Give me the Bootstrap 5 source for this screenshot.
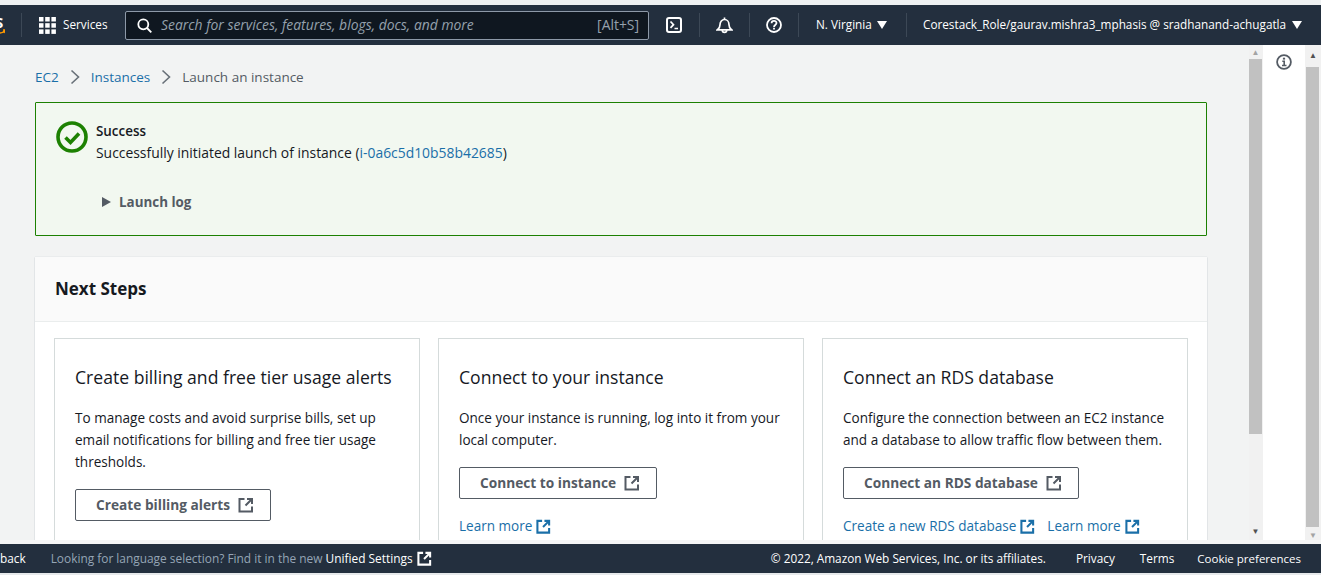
<!DOCTYPE html>
<html lang="en">
<head>
  <meta charset="UTF-8">
  <title>Launch an instance</title>
  <link href="https://cdn.jsdelivr.net/npm/bootstrap@5.3.3/dist/css/bootstrap.min.css" rel="stylesheet">
  <style>
    html, body { height: 100%; overflow: hidden; }
    body { background: #f2f3f3; font-family: "Open Sans", "Liberation Sans", sans-serif; font-size: 14px; color: #16191f; }
    a { text-decoration: none; color: #1a6fa8; }

    .page-shell { height: 575px; }
    .top-gap { height: 5px; background: #eef1f2; }
    .bottom-gap { height: 2px; background: #e6e9eb; }

    /* console header */
    .aws-bar { height: 40px; background: #232f3e; color: #fff; font-size: 11.75px; }
    .aws-logo { width: 5px; height: 24px; overflow: hidden; padding-top: 3px; }
    .aws-logo span { display: block; margin-left: -5px; font-size: 15px; font-weight: 700; line-height: 13px; }
    .bar-sep { width: 1px; height: 24px; background: #3c4856; }
    .svc-btn { width: 103px; padding-left: 17px; gap: 7px; }
    .search-box { width: 524px; height: 29px; background: #0f1720; border: 1px solid #8d99a8; border-radius: 2px; padding: 0 9px 0 11px; color: #95a1ad; font-size: 13.9px; }
    .search-box em { margin-left: 9px; }
    .icon-cell { width: 48.5px; }
    .icon-first { width: 50px; }
    .region { width: 107px; padding-left: 17px; }
    .acct { padding-left: 16px; white-space: nowrap; }
    .caret-dn { margin-left: 5px; }
    .acct .caret-dn { margin-left: 6px; }

    /* main */
    .work-area { height: 499px; }
    .work-row { height: 495px; }
    .work-strip { height: 4px; background: #f4f5f5; }
    .content-pane { width: 1249px; overflow: hidden; padding: 0 42px 0 35px; }
    .crumbs { height: 57px; color: #545b64; font-size: 13.5px; gap: 11px; padding-top: 7px; }
    .flash-box { height: 134px; border: 1px solid #1d8102; background: #f2f8f0; border-radius: 1px; padding: 18px 20px; gap: 8px; }
    .flash-title { font-weight: 600; font-size: 13.4px; line-height: 22px; margin-top: -1px; }
    .flash-msg { font-size: 13.9px; line-height: 22px; }
    .log-toggle { font-weight: 700; color: #545b64; margin-top: 27px; margin-left: 6px; line-height: 22px; gap: 8px; font-size: 13.4px; }
    .steps-panel { margin-top: 21px; background: #fff; box-shadow: 0 1px 1px rgba(0,31,63,.2), 0 0 1px rgba(0,31,63,.2); }
    .steps-head { height: 65px; background: #fafafa; border-bottom: 1px solid #eaeded; padding: 0 20px 1px; font-size: 17px; font-weight: 700; }
    .steps-body { padding: 16px 19px 0; gap: 18px; height: 300px; }
    .step-tile { width: 366px; height: 300px; border: 1px solid #d5dbdb; padding: 25px 20px; }
    .step-tile h2 { font-size: 17.6px; font-weight: 400; line-height: 26px; margin: 0 0 17px; }
    .step-tile p { line-height: 22px; margin: 0 0 16px; font-size: 13.55px; }
    .open-btn { display: inline-flex; align-items: center; gap: 8px; height: 32px; padding: 0 16px 0 20px; border: 1px solid #545b64; border-radius: 2px; color: #545b64; font-weight: 700; font-size: 13.7px; }
    .learn-row { margin-top: 17px; gap: 12px; font-size: 13.55px; }
    .learn-row a { display: inline-flex; align-items: center; gap: 4px; }

    /* scrollbars, drawn since the shot has them fixed */
    .sbar { width: 14px; background: #f1f1f1; }
    .sbar-out { width: 16px; }
    .sbar-arrow { height: 13px; font-size: 8px; line-height: 13px; text-align: center; color: #a3a3a3; padding-right: 1px; }
    .sbar-arrow-end { height: 10px; line-height: 10px; margin-bottom: 4px; color: #505050; }
    .sbar-out .sbar-arrow { padding-right: 0; height: 14px; line-height: 14px; color: #505050; }
    .sbar-out .sbar-arrow-end { height: 10px; line-height: 10px; margin-bottom: 0; color: #a3a3a3; }
    .sbar-gap-out { height: 3px; }
    .sbar-thumb-in { background: #c1c1c1; width: 13px; height: 375px; margin-top: 1px; }
    .sbar-thumb-out { background: #c1c1c1; width: 13px; height: 460px; margin: 5px 0 0 1px; }
    .side-rail { width: 42px; background: #fff; padding-top: 9px; }

    /* footer */
    .aws-foot { height: 29px; background: #232f3e; color: #fff; font-size: 11.8px; }
    .foot-note { color: #95a5b5; margin-left: 25px; font-size: 11.9px; }
    .foot-links { padding-right: 20px; gap: 25px; }
    .foot-copy { margin-right: 5px; }
    .foot-cookie { font-size: 11.5px; margin-left: -2px; }
  </style>
</head>
<body>
<div class="page-shell d-flex flex-column">
  <div class="top-gap"></div>

  <!-- Console header -->
  <div class="aws-bar d-flex align-items-center">
    <div class="aws-logo flex-shrink-0">
      <span>S</span>
      <svg width="5" height="8" viewBox="0 0 5 8" class="d-block"><path d="M0 4q3 0 4-2M3 1l2 0-1 3" stroke="#f90" stroke-width="1.4" fill="none"/></svg>
    </div>
    <div class="bar-sep ms-3"></div>
    <div class="svc-btn d-flex align-items-center flex-shrink-0">
      <svg width="17" height="17" viewBox="0 0 17 17" fill="#fff"><rect width="4.500" height="4.500"/><rect x="6.200" width="4.500" height="4.500"/><rect x="12.400" width="4.500" height="4.500"/><rect y="6.200" width="4.500" height="4.500"/><rect x="6.200" y="6.200" width="4.500" height="4.500"/><rect x="12.400" y="6.200" width="4.500" height="4.500"/><rect y="12.400" width="4.500" height="4.500"/><rect x="6.200" y="12.400" width="4.500" height="4.500"/><rect x="12.400" y="12.400" width="4.500" height="4.500"/></svg>
      <span>Services</span>
    </div>
    <div class="search-box d-flex align-items-center flex-shrink-0">
      <svg width="15" height="15" viewBox="0 0 15 15" fill="none" stroke="#fff" stroke-width="1.800"><circle cx="6.300" cy="6.300" r="5"/><path d="M10 10l4.300 4.300"/></svg>
      <em class="flex-grow-1">Search for services, features, blogs, docs, and more</em>
      <span>[Alt+S]</span>
    </div>
    <div class="icon-first d-flex justify-content-center">
      <svg width="16" height="16" viewBox="0 0 16 16" fill="none" stroke="#fff" stroke-width="2"><rect x="1" y="1" width="14" height="14" rx="2"/><path d="M4.500 4.500l3 3.200-3 3.200M8.500 11.500h3.500" stroke-width="1.700"/></svg>
    </div>
    <div class="bar-sep"></div>
    <div class="icon-cell d-flex justify-content-center">
      <svg width="17" height="17" viewBox="0 0 17 17" fill="none" stroke="#fff" stroke-width="1.700"><path d="M8.500 .5v2M1.500 12.800h14c-1.800-1.300-2.500-2.300-2.500-5 0-3-2-5.300-4.500-5.300S4 4.800 4 7.800c0 2.700-.7 3.700-2.500 5z"/><path d="M6.300 13a2.200 2.400 0 0 0 4.400 0"/></svg>
    </div>
    <div class="bar-sep"></div>
    <div class="icon-cell d-flex justify-content-center">
      <svg width="16" height="16" viewBox="0 0 16 16" fill="none" stroke="#fff" stroke-width="1.800"><circle cx="8" cy="8" r="7"/><path d="M5.600 6.200c0-3.100 4.900-3.100 4.900-.1 0 1.900-2.500 1.900-2.500 3.800"/><path d="M8 10.800v1.800"/></svg>
    </div>
    <div class="bar-sep"></div>
    <div class="region flex-shrink-0 d-flex align-items-center">N. Virginia
      <svg class="caret-dn" width="10" height="8" viewBox="0 0 10 8" fill="#fff"><path d="M0 0h10L5 8z"/></svg>
    </div>
    <div class="bar-sep"></div>
    <div class="acct d-flex align-items-center">Corestack_Role/gaurav.mishra3_mphasis @ sradhanand-achugatla
      <svg class="caret-dn" width="10" height="8" viewBox="0 0 10 8" fill="#fff"><path d="M0 0h10L5 8z"/></svg>
    </div>
  </div>

  <div class="work-area">
    <div class="work-row d-flex">
      <div class="content-pane flex-shrink-0">
        <div class="crumbs d-flex align-items-center">
          <a href="#">EC2</a>
          <svg width="10" height="16" viewBox="0 0 10 16" fill="none" stroke="#687078" stroke-width="1.600"><path d="M1.500 1.500L8.500 8l-7 6.500"/></svg>
          <a href="#">Instances</a>
          <svg width="10" height="16" viewBox="0 0 10 16" fill="none" stroke="#687078" stroke-width="1.600"><path d="M1.500 1.500L8.500 8l-7 6.500"/></svg>
          <span>Launch an instance</span>
        </div>

        <div class="flash-box d-flex">
          <svg width="32" height="32" viewBox="0 0 32 32" fill="none" stroke="#1d8102" class="flex-shrink-0"><circle cx="16" cy="16" r="14" stroke-width="3.600"/><path d="M9.500 16.500l5 5 8.500-9" stroke-width="3.600"/></svg>
          <div>
            <div class="flash-title">Success</div>
            <div class="flash-msg">Successfully initiated launch of instance (<a href="#">i-0a6c5d10b58b42685</a>)</div>
            <div class="log-toggle d-flex align-items-center">
              <svg width="9" height="10" viewBox="0 0 9 10" fill="#545b64"><path d="M0 0l9 5-9 5z"/></svg>
              <span>Launch log</span>
            </div>
          </div>
        </div>

        <div class="steps-panel">
          <div class="steps-head d-flex align-items-center">Next Steps</div>
          <div class="steps-body d-flex">
            <div class="step-tile flex-shrink-0">
              <h2>Create billing and free tier usage alerts</h2>
              <p>To manage costs and avoid surprise bills, set up email notifications for billing and free tier usage thresholds.</p>
              <a href="#" class="open-btn">Create billing alerts
                <svg width="16" height="16" viewBox="0 0 16 16" fill="none" stroke="currentColor" stroke-width="2"><path d="M6.500 2H1.500v12.500H14V9.500"/><path d="M9 2h5v5M14 2L7.500 8.500" stroke-width="2"/></svg>
              </a>
            </div>
            <div class="step-tile flex-shrink-0">
              <h2>Connect to your instance</h2>
              <p>Once your instance is running, log into it from your local computer.</p>
              <a href="#" class="open-btn">Connect to instance
                <svg width="16" height="16" viewBox="0 0 16 16" fill="none" stroke="currentColor" stroke-width="2"><path d="M6.500 2H1.500v12.500H14V9.500"/><path d="M9 2h5v5M14 2L7.500 8.500"/></svg>
              </a>
              <div class="learn-row d-flex">
                <a href="#">Learn more
                  <svg width="15" height="15" viewBox="0 0 16 16" fill="none" stroke="currentColor" stroke-width="2.200"><path d="M6.500 2H1.500v12.500H14V9.500"/><path d="M9 2h5v5M14 2L7.500 8.500"/></svg>
                </a>
              </div>
            </div>
            <div class="step-tile flex-shrink-0">
              <h2>Connect an RDS database</h2>
              <p>Configure the connection between an EC2 instance and a database to allow traffic flow between them.</p>
              <a href="#" class="open-btn">Connect an RDS database
                <svg width="16" height="16" viewBox="0 0 16 16" fill="none" stroke="currentColor" stroke-width="2"><path d="M6.500 2H1.500v12.500H14V9.500"/><path d="M9 2h5v5M14 2L7.500 8.500"/></svg>
              </a>
              <div class="learn-row d-flex">
                <a href="#">Create a new RDS database
                  <svg width="15" height="15" viewBox="0 0 16 16" fill="none" stroke="currentColor" stroke-width="2.200"><path d="M6.500 2H1.500v12.500H14V9.500"/><path d="M9 2h5v5M14 2L7.500 8.500"/></svg>
                </a>
                <a href="#">Learn more
                  <svg width="15" height="15" viewBox="0 0 16 16" fill="none" stroke="currentColor" stroke-width="2.200"><path d="M6.500 2H1.500v12.500H14V9.500"/><path d="M9 2h5v5M14 2L7.500 8.500"/></svg>
                </a>
              </div>
            </div>
          </div>
        </div>
      </div>

      <!-- inner scrollbar -->
      <div class="sbar d-flex flex-column flex-shrink-0">
        <div class="sbar-arrow">&#9650;</div>
        <div class="sbar-thumb-in"></div>
        <div class="flex-grow-1"></div>
        <div class="sbar-arrow sbar-arrow-end">&#9660;</div>
      </div>

      <div class="side-rail flex-shrink-0 d-flex justify-content-center">
        <svg width="16" height="16" viewBox="0 0 16 16" fill="none" stroke="#545b64" stroke-width="1.800"><circle cx="8" cy="8" r="6.900"/><path d="M8 3.700v1.900" stroke-width="2.200"/><path d="M6.300 7.300H8.200V11.500M6 11.500h4.500" stroke-width="1.600"/></svg>
      </div>

      <!-- outer scrollbar -->
      <div class="sbar sbar-out d-flex flex-column flex-shrink-0">
        <div class="sbar-gap-out"></div>
        <div class="sbar-arrow">&#9650;</div>
        <div class="sbar-thumb-out"></div>
        <div class="flex-grow-1"></div>
        <div class="sbar-arrow sbar-arrow-end">&#9660;</div>
      </div>
    </div>
    <div class="work-strip"></div>
  </div>

  <!-- Console footer -->
  <div class="aws-foot d-flex align-items-center justify-content-between">
    <div class="d-flex align-items-center">
      <span>back</span>
      <span class="foot-note">Looking for language selection? Find it in the new <span class="text-white">Unified Settings</span></span>
      <svg width="15" height="15" viewBox="0 0 16 16" fill="none" stroke="#fff" stroke-width="2.200" class="ms-1"><path d="M6.500 2H1.500v12.500H14V9.500"/><path d="M9 2h5v5M14 2L7.500 8.500"/></svg>
    </div>
    <div class="foot-links d-flex">
      <span class="foot-copy">&copy; 2022, Amazon Web Services, Inc. or its affiliates.</span>
      <span>Privacy</span>
      <span>Terms</span>
      <span class="foot-cookie">Cookie preferences</span>
    </div>
  </div>
  <div class="bottom-gap"></div>
</div>

<script src="https://cdn.jsdelivr.net/npm/bootstrap@5.3.3/dist/js/bootstrap.bundle.min.js"></script>
</body>
</html>
